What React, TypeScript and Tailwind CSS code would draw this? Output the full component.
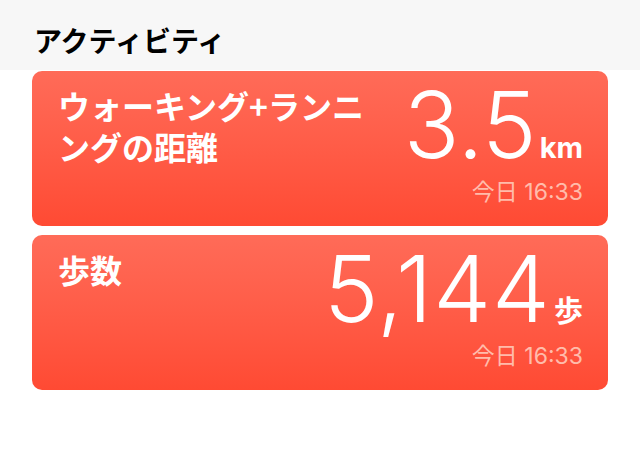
import React from "react";

const jp = { fontFamily: '"Noto Sans CJK JP", sans-serif' };

function Card({
  title,
  value,
  unit,
  valueClass,
}: {
  title: React.ReactNode;
  value: string;
  unit: string;
  valueClass: string;
}) {
  return (
    <div className="flex h-[155px] justify-between rounded-[10px] bg-gradient-to-b from-[#ff6b58] to-[#ff4a33] pl-[26px] pr-[25px] text-white">
      <div
        className="pt-[14px] text-[32px] font-bold leading-[41px]"
        style={jp}
      >
        {title}
      </div>
      <div className="flex flex-col items-end pt-[8px]">
        <div className="flex items-baseline">
          <span className={valueClass}>{value}</span>
          <span className="ml-[3px] font-['Inter','Noto_Sans_CJK_JP',sans-serif] text-[29px] font-bold leading-none">
            {unit}
          </span>
        </div>
        <div className="mt-[10px] font-['Inter','Noto_Sans_CJK_JP',sans-serif] text-[23px] leading-none text-[#ffbcab]">
          今日 16:33
        </div>
      </div>
    </div>
  );
}

export default function App() {
  return (
    <div className="h-[456px] w-[640px] bg-white">
      <div className="h-[70px] bg-[#f7f7f7] pl-[34px] pt-[24px]">
        <div className="text-[28px] font-bold leading-[32px] text-black" style={jp}>
          アクティビティ
        </div>
      </div>
      <div className="flex flex-col gap-[9px] px-[32px] pt-[1px]">
        <Card
          title={
            <>
              ウォーキング+ランニ
              <br />
              ングの距離
            </>
          }
          value="3.5"
          unit="km"
          valueClass="font-['Inter',sans-serif] text-[92px] font-light leading-none tracking-[0px]"
        />
        <Card
          title="歩数"
          value="5,144"
          unit="歩"
          valueClass="font-['Inter',sans-serif] text-[92px] font-light leading-none tracking-[1px]"
        />
      </div>
    </div>
  );
}
